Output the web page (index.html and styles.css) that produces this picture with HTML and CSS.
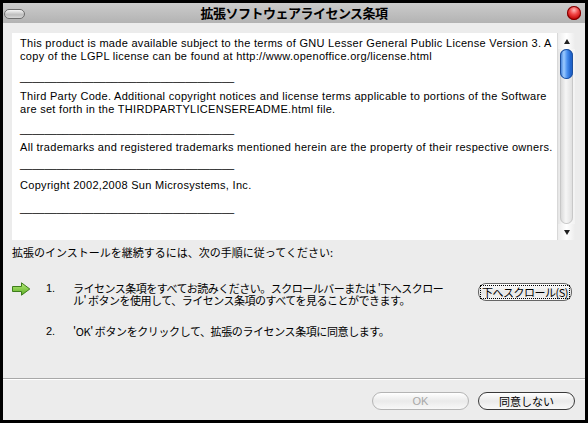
FILE: index.html
```html
<!DOCTYPE html>
<html lang="ja">
<head>
<meta charset="utf-8">
<title>拡張ソフトウェアライセンス条項</title>
<link rel="stylesheet" href="styles.css">
</head>
<body>
<div class="window">
  <div class="titlebar">
    <span class="tb-left"><span class="pill-btn"></span></span>
    <span class="title">拡張ソフトウェアライセンス条項</span>
    <span class="tb-right"><span class="close-btn"></span></span>
  </div>
  <div class="content">
    <div class="license">
      <div class="license-text">
        <p class="para">This product is made available subject to the terms of GNU Lesser General Public License Version 3. A<br>copy of the LGPL license can be found at http://www.openoffice.org/license.html</p>
        <p class="dash d1">___________________________________</p>
        <p class="para">Third Party Code. Additional copyright notices and license terms applicable to portions of the Software<br>are set forth in the THIRDPARTYLICENSEREADME.html file.</p>
        <p class="dash d2">___________________________________</p>
        <p class="para">All trademarks and registered trademarks mentioned herein are the property of their respective owners.</p>
        <p class="dash d3">___________________________________</p>
        <p class="para">Copyright 2002,2008 Sun Microsystems, Inc.</p>
        <p class="dash d4">___________________________________</p>
      </div>
      <div class="scrollbar">
        <div class="sb-up"><span class="tri-up"></span></div>
        <div class="sb-track"><div class="sb-thumb"></div></div>
        <div class="sb-down"><span class="tri-down"></span></div>
      </div>
    </div>
    <p class="intro">拡張のインストールを継続するには、次の手順に従ってください:</p>
    <div class="step step1">
      <span class="step-icon">
        <svg width="19" height="14" viewBox="0 0 19 14">
          <defs>
            <linearGradient id="ag" x1="0" y1="0" x2="0" y2="1">
              <stop offset="0" stop-color="#b8ec7a"/>
              <stop offset="1" stop-color="#5aad22"/>
            </linearGradient>
          </defs>
          <path d="M0.5 4.5 H9.5 V0.8 L17.8 7 L9.5 13.2 V9.5 H0.5 Z" fill="url(#ag)" stroke="#3f7d1c" stroke-width="1"/>
        </svg>
      </span>
      <span class="step-num">1.</span>
      <span class="step-text">ライセンス条項をすべてお読みください。スクロールバーまたは '下へスクロー<br>ル' ボタンを使用して、ライセンス条項のすべてを見ることができます。</span>
      <span class="scroll-btn"><span class="focus">下へスクロール(S)</span></span>
    </div>
    <div class="step step2">
      <span class="step-icon"></span>
      <span class="step-num">2.</span>
      <span class="step-text step2-text">'OK' ボタンをクリックして、拡張のライセンス条項に同意します。</span>
    </div>
  </div>
  <div class="footer">
    <span class="btn disabled">OK</span>
    <span class="btn">同意しない</span>
  </div>
</div>
</body>
</html>
```
FILE: styles.css
```css
html, body {
  margin: 0;
  padding: 0;
  background: #000;
  width: 588px;
  height: 423px;
  overflow: hidden;
}
.window {
  margin: 3px;
  width: 582px;
  height: 417px;
  background: #ececec;
  display: flex;
  flex-direction: column;
  font-family: "Liberation Sans", "Noto Sans CJK JP", sans-serif;
  font-size: 11px;
  color: #000;
}
.titlebar {
  height: 20px;
  background: linear-gradient(#cbcbcb, #b3b3b3);
  display: grid;
  grid-template-columns: 1fr auto 1fr;
  align-items: center;
}
.tb-left { display: flex; padding-left: 1px; }
.tb-right { display: flex; justify-content: flex-end; padding-right: 4px; }
.pill-btn {
  width: 19px;
  height: 8px;
  margin-top: 2px;
  border: 1px solid #6e6e6e;
  border-radius: 5px;
  background: linear-gradient(#f6f6f6, #bdbdbd 60%, #d8d8d8);
}
.close-btn {
  width: 14px;
  height: 14px;
  border-radius: 50%;
  background: radial-gradient(circle at 50% 30%, #ffb8b8 0, #f24848 35%, #c00000 75%, #8a0000 100%);
  box-shadow: inset 0 0 0 1px #7a0000;
}
.title {
  font-family: "Noto Sans CJK JP", sans-serif;
  font-weight: bold;
  font-size: 13px;
  letter-spacing: -0.5px;
  color: #000;
  line-height: 20px;
}
.content {
  flex: 1;
  display: flex;
  flex-direction: column;
  padding: 10px 0 0 9px;
}
.license {
  height: 207px;
  margin-right: 10px;
  background: #fff;
  display: flex;
}
.license-text {
  flex: 1;
  padding: 4px 0 0 8px;
  line-height: 13px;
  white-space: nowrap;
}
.license-text p { margin: 0; }
.license-text .para { letter-spacing: 0.3px; }
.license-text .dash { letter-spacing: 0; }
.license-text .d1 { margin-top: 8px; margin-bottom: 6px; }
.license-text .d2 { margin-top: 7px; margin-bottom: 5px; }
.license-text .d3 { margin-top: 4px; margin-bottom: 8px; }
.license-text .d4 { margin-top: 10px; }
.scrollbar {
  width: 17px;
  display: flex;
  flex-direction: column;
  background: linear-gradient(90deg, #e4e4e4, #ffffff 40%, #f2f2f2);
  border-left: 1px solid #d8d8d8;
}
.sb-up, .sb-down {
  height: 16px;
  display: flex;
  justify-content: center;
  align-items: center;
  background: linear-gradient(90deg, #ececec, #ffffff 50%, #ececec);
}
.tri-up {
  width: 0; height: 0;
  border-left: 3px solid transparent;
  border-right: 3px solid transparent;
  border-bottom: 5px solid #222;
}
.tri-down {
  width: 0; height: 0;
  border-left: 3px solid transparent;
  border-right: 3px solid transparent;
  border-top: 5px solid #222;
}
.sb-track {
  flex: 1;
  margin: 0 2px;
  border-radius: 7px;
  background: linear-gradient(90deg, #d4d4d4, #f6f6f6 45%, #dcdcdc);
  box-shadow: inset 0 0 0 1px #c8c8c8;
}
.sb-thumb {
  height: 30px;
  border-radius: 7px;
  background: linear-gradient(90deg, #2f6fcf, #9ccbff 30%, #4a90ef 55%, #1b5fc8 85%, #2d6fd0);
  box-shadow: inset 0 0 0 1px #1d4f9c;
}
.intro {
  margin: 6px 0 0 0;
  line-height: 13px;
  font-family: "Noto Sans CJK JP", sans-serif;
  letter-spacing: 0;
}
.step {
  display: grid;
  grid-template-columns: 34px 27px 1fr auto;
  align-items: start;
  line-height: 12px;
}
.step1 { margin-top: 23px; }
.step2 { margin-top: 19px; }
.step-icon { display: flex; }
.step-num { font-family: "Liberation Sans", sans-serif; }
.step-text {
  font-family: "Noto Sans CJK JP", sans-serif;
  letter-spacing: -0.5px;
  white-space: nowrap;
}
.step2-text { letter-spacing: -0.4px; }
.scroll-btn {
  margin-right: 13px;
  margin-top: 1px;
  height: 16px;
  padding: 0 2px;
  display: flex;
  align-items: center;
  border: 1px solid #666;
  border-radius: 8px;
  background: linear-gradient(#ffffff, #e6e6e6 50%, #f4f4f4);
  font-family: "Noto Sans CJK JP", sans-serif;
  letter-spacing: -0.5px;
}
.scroll-btn .focus {
  outline: 1px dotted #000;
  line-height: 12px;
  padding: 0 1px;
}
.footer {
  height: 42px;
  border-top: 1px solid #a8a8a8;
  box-shadow: inset 0 1px 0 #ffffff;
  display: flex;
  justify-content: flex-end;
  align-items: flex-start;
  gap: 9px;
  padding: 13px 10px 0 0;
  box-sizing: border-box;
}
.btn {
  box-sizing: border-box;
  width: 97px;
  height: 18px;
  border: 1px solid #3a3a3a;
  border-radius: 9px;
  background: linear-gradient(#ffffff, #eaeaea 50%, #f8f8f8);
  display: flex;
  align-items: center;
  justify-content: center;
  font-family: "Noto Sans CJK JP", sans-serif;
  font-size: 11px;
}
.btn.disabled {
  border-color: #b4b4b4;
  color: #a8a8a8;
  font-family: "Liberation Sans", sans-serif;
}
```
